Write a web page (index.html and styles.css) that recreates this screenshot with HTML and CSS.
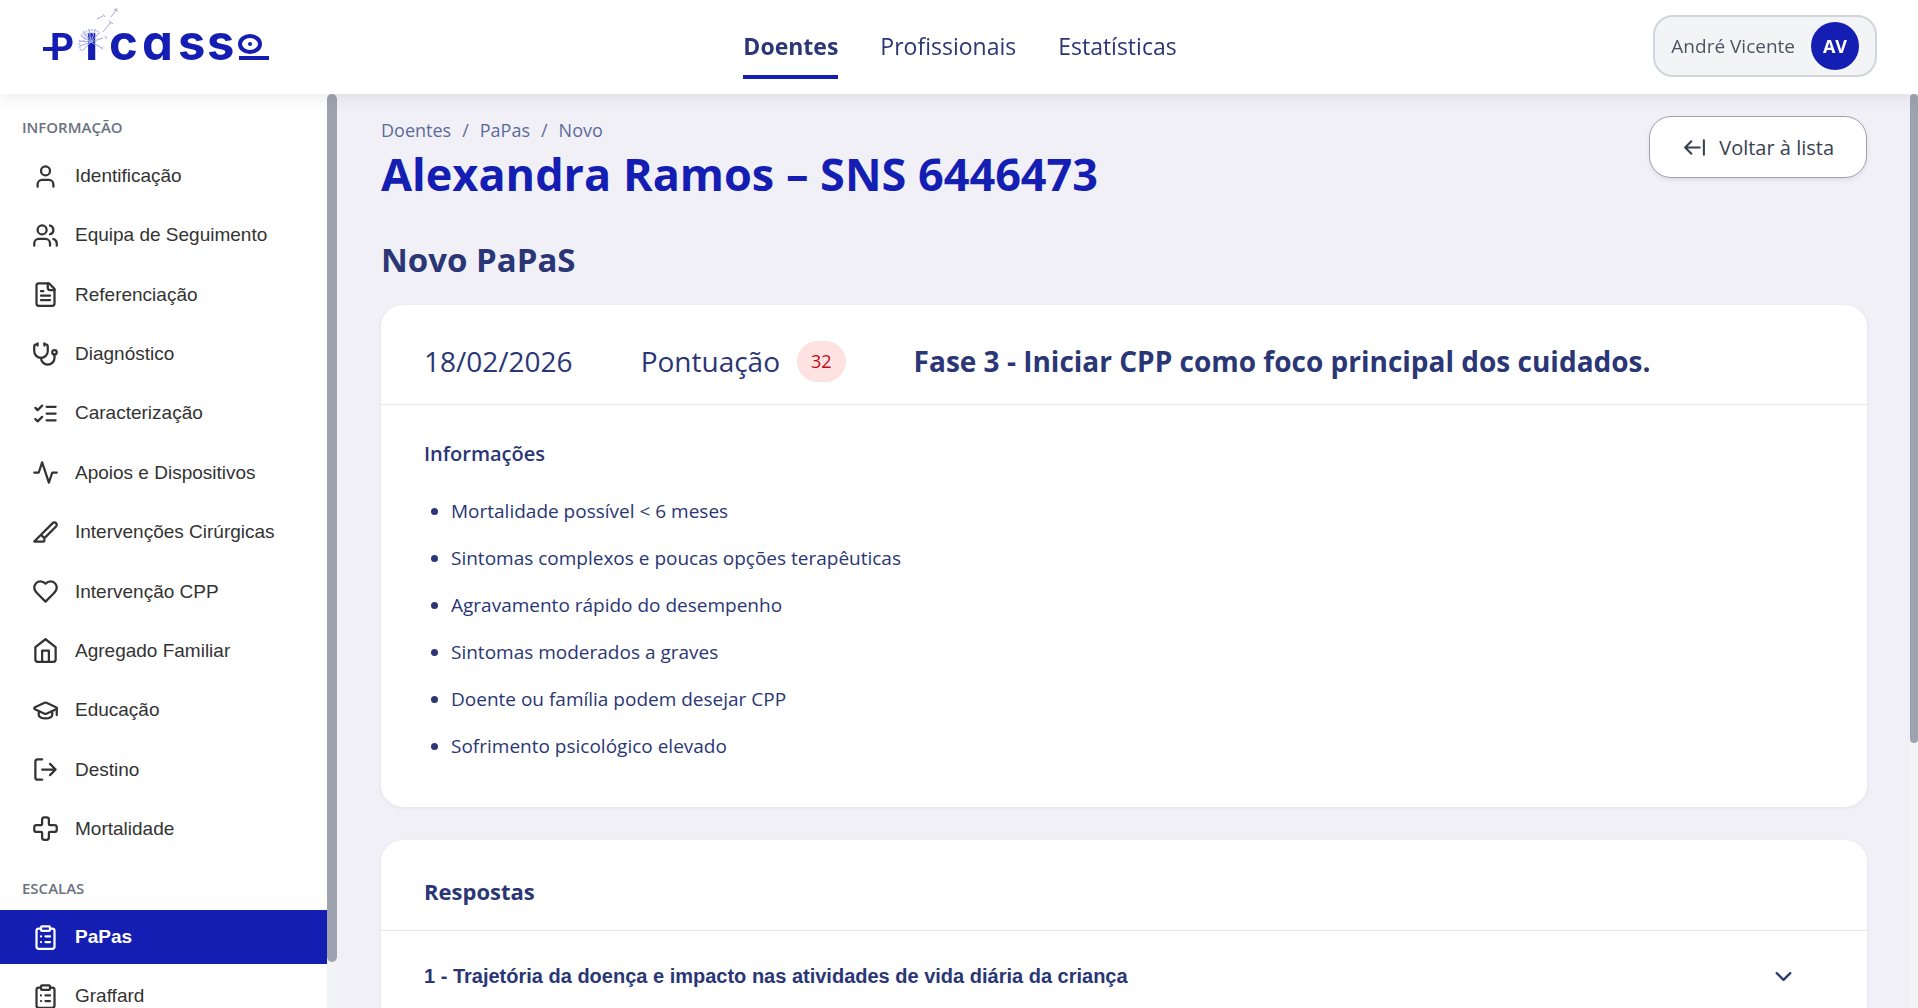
FILE: index.html
```html
<!DOCTYPE html>
<html lang="pt">
<head>
    <meta charset="UTF-8">
    <meta name="viewport" content="width=device-width, initial-scale=1.0">
    <title>Picasso - Novo PaPaS</title>
    <link rel="stylesheet" href="styles.css">
</head>
<body>
    <header class="topbar">
        <a href="#" class="logo" aria-label="Picasso">
            <svg width="240" height="90" viewBox="0 0 240 90">
                <g class="logo-text">
                    <text class="logo-cap" x="7" y="60">P</text>
                    <text x="42" y="60">ı</text>
                    <text x="66 99 135 164" y="60">cass</text>
                </g>
                <g class="logo-shapes">
                    <rect x="0" y="47" width="14" height="4" />
                    <rect x="196" y="56" width="30" height="4" />
                    <circle cx="207" cy="44" r="2" />
                    <ellipse class="ring" cx="207" cy="44" rx="10" ry="8" />
                </g>
                <!-- dandelion over the i -->
                <g class="dandelion">
                    <path d="M48 42 38 36M48 42 40 31M48 42 46 29M48 42 52 30M48 42 56 33M48 42 36 41M48 42 37 46M48 42 39 51M48 42 60 38M48 42 59 48" />
                    <path d="M60 32 68 22M66 21l4 3M68 22l-2 2M54 19l6-3M60 14l2 3M68 17l5-7M71 9l4 2M73 10l1-2M62 36l2 3" />
                    <path class="fluff" d="M38 36 42 32 46 30 52 30 57 33M37 40 36 45 38 51M41 36 46 33 53 34M40 42 42 38 50 37M58 49 61 47" />
                </g>
            </svg>
        </a>
        <nav class="main-nav">
            <a href="#" class="active">Doentes</a>
            <a href="#">Profissionais</a>
            <a href="#">Estatísticas</a>
        </nav>
        <button class="user-btn">
            André Vicente
            <span class="avatar">AV</span>
        </button>
    </header>

    <div class="layout">
        <aside class="sidebar">
            <h4>Informação</h4>
            <ul class="menu menu-info">
                <li><a href="#">
                    <svg class="icon" viewBox="0 0 24 24"><path d="M19 21v-2a4 4 0 0 0-4-4H9a4 4 0 0 0-4 4v2" /><circle cx="12" cy="7" r="4" /></svg>
                    Identificação</a></li>
                <li><a href="#">
                    <svg class="icon" viewBox="0 0 24 24"><path d="M16 21v-2a4 4 0 0 0-4-4H6a4 4 0 0 0-4 4v2" /><circle cx="9" cy="7" r="4" /><path d="M22 21v-2a4 4 0 0 0-3-3.87M16 3.13a4 4 0 0 1 0 7.75" /></svg>
                    Equipa de Seguimento</a></li>
                <li><a href="#">
                    <svg class="icon" viewBox="0 0 24 24"><path d="M15 2H6a2 2 0 0 0-2 2v16a2 2 0 0 0 2 2h12a2 2 0 0 0 2-2V7Z" /><path d="M14 2v4a2 2 0 0 0 2 2h4M10 9H8M16 13H8M16 17H8" /></svg>
                    Referenciação</a></li>
                <li><a href="#">
                    <svg class="icon" viewBox="0 0 24 24"><path d="M11 2v2M5 2v2M5 3H4a2 2 0 0 0-2 2v4a6 6 0 0 0 12 0V5a2 2 0 0 0-2-2h-1" /><path d="M8 15a6 6 0 0 0 12 0v-3" /><circle cx="20" cy="10" r="2" /></svg>
                    Diagnóstico</a></li>
                <li><a href="#">
                    <svg class="icon" viewBox="0 0 24 24"><path d="m3 17 2 2 4-4M3 7l2 2 4-4M13 6h8M13 12h8M13 18h8" /></svg>
                    Caracterização</a></li>
                <li><a href="#">
                    <svg class="icon" viewBox="0 0 24 24"><path d="M22 12h-4l-3 9L9 3l-3 9H2" /></svg>
                    Apoios e Dispositivos</a></li>
                <li><a href="#">
                    <svg class="icon" viewBox="0 0 24 24"><path d="M11 16.586V19a1 1 0 0 1-1 1H2L18.37 3.63a1 1 0 1 1 3 3l-9.663 9.663a1 1 0 0 1-1.414 0L8 14" /></svg>
                    Intervenções Cirúrgicas</a></li>
                <li><a href="#">
                    <svg class="icon" viewBox="0 0 24 24"><path d="M19 14c1.49-1.46 3-3.21 3-5.5A5.5 5.5 0 0 0 16.5 3c-1.76 0-3 .5-4.5 2-1.5-1.5-2.74-2-4.5-2A5.5 5.5 0 0 0 2 8.5c0 2.3 1.5 4.05 3 5.5l7 7Z" /></svg>
                    Intervenção CPP</a></li>
                <li><a href="#">
                    <svg class="icon" viewBox="0 0 24 24"><path d="m3 9 9-7 9 7v11a2 2 0 0 1-2 2H5a2 2 0 0 1-2-2z" /><path d="M9 22V12h6v10" /></svg>
                    Agregado Familiar</a></li>
                <li><a href="#">
                    <svg class="icon" viewBox="0 0 24 24"><path d="M21.42 10.922a1 1 0 0 0-.019-1.838L12.83 5.18a2 2 0 0 0-1.66 0L2.6 9.08a1 1 0 0 0 0 1.832l8.57 3.908a2 2 0 0 0 1.66 0z" /><path d="M22 10v6M6 12.5V16a6 3 0 0 0 12 0v-3.5" /></svg>
                    Educação</a></li>
                <li><a href="#">
                    <svg class="icon" viewBox="0 0 24 24"><path d="M9 21H5a2 2 0 0 1-2-2V5a2 2 0 0 1 2-2h4M16 17l5-5-5-5M21 12H9" /></svg>
                    Destino</a></li>
                <li><a href="#">
                    <svg class="icon" viewBox="0 0 24 24"><path d="M4 9a2 2 0 0 0-2 2v2a2 2 0 0 0 2 2h4a1 1 0 0 1 1 1v4a2 2 0 0 0 2 2h2a2 2 0 0 0 2-2v-4a1 1 0 0 1 1-1h4a2 2 0 0 0 2-2v-2a2 2 0 0 0-2-2h-4a1 1 0 0 1-1-1V4a2 2 0 0 0-2-2h-2a2 2 0 0 0-2 2v4a1 1 0 0 1-1 1z" /></svg>
                    Mortalidade</a></li>
            </ul>
            <h4>Escalas</h4>
            <ul class="menu">
                <li><a href="#" class="active">
                    <svg class="icon" viewBox="0 0 24 24"><rect x="8" y="2" width="8" height="4" rx="1" /><path d="M16 4h2a2 2 0 0 1 2 2v14a2 2 0 0 1-2 2H6a2 2 0 0 1-2-2V6a2 2 0 0 1 2-2h2M12 11h4M12 16h4M8 11h.01M8 16h.01" /></svg>
                    PaPas</a></li>
                <li><a href="#">
                    <svg class="icon" viewBox="0 0 24 24"><rect x="8" y="2" width="8" height="4" rx="1" /><path d="M16 4h2a2 2 0 0 1 2 2v14a2 2 0 0 1-2 2H6a2 2 0 0 1-2-2V6a2 2 0 0 1 2-2h2M12 11h4M12 16h4M8 11h.01M8 16h.01" /></svg>
                    Graffard</a></li>
            </ul>
        </aside>
        <div class="scrollbar scrollbar-side"><div class="thumb"></div></div>

        <main class="content">
            <div class="page-head">
                <div>
                    <nav class="breadcrumb">
                        <a href="#">Doentes</a>
                        <span>/</span>
                        <a href="#">PaPas</a>
                        <span>/</span>
                        <a href="#">Novo</a>
                    </nav>
                    <h1>Alexandra Ramos – SNS 6446473</h1>
                </div>
                <button class="back-btn">
                    <svg class="icon" viewBox="0 0 24 24"><path d="m9 6-6 6 6 6M3 12h14M21 19V5" /></svg>
                    Voltar à lista
                </button>
            </div>

            <h2>Novo PaPaS</h2>

            <section class="card">
                <div class="summary">
                    <span>18/02/2026</span>
                    <div class="score">
                        Pontuação
                        <span class="badge">32</span>
                    </div>
                    <strong>Fase 3 - Iniciar CPP como foco principal dos cuidados.</strong>
                </div>
                <div class="info">
                    <h3>Informações</h3>
                    <ul>
                        <li>Mortalidade possível &lt; 6 meses</li>
                        <li>Sintomas complexos e poucas opções terapêuticas</li>
                        <li>Agravamento rápido do desempenho</li>
                        <li>Sintomas moderados a graves</li>
                        <li>Doente ou família podem desejar CPP</li>
                        <li>Sofrimento psicológico elevado</li>
                    </ul>
                </div>
            </section>

            <section class="card answers">
                <h3>Respostas</h3>
                <button class="question" aria-expanded="false">
                    1 - Trajetória da doença e impacto nas atividades de vida diária da criança
                    <svg class="icon" viewBox="0 0 24 24"><path d="m6 9 6 6 6-6" /></svg>
                </button>
            </section>
        </main>
        <div class="scrollbar scrollbar-main"><div class="thumb"></div></div>
    </div>
</body>
</html>
```
FILE: styles.css
```css
* {
    box-sizing: border-box;
}

body {
    font-family: "Segoe UI", "Open Sans", sans-serif;
    margin: 0;
    height: 100vh;
    display: flex;
    flex-direction: column;
    background-color: #f1f0f7;
    color: #2a3675;
    overflow: hidden;
}

h1, h2, h3, h4, ul {
    margin: 0;
    padding: 0;
}

a {
    color: inherit;
    text-decoration: none;
}

button {
    font-family: inherit;
    cursor: pointer;
}

.icon {
    width: 27px;
    height: 27px;
    flex-shrink: 0;
    fill: none;
    stroke: currentColor;
    stroke-width: 2;
    stroke-linecap: round;
    stroke-linejoin: round;
}

/* Top bar */
.topbar {
    display: grid;
    grid-template-columns: 1fr auto 1fr;
    align-items: center;
    height: 94px;
    flex-shrink: 0;
    padding: 0 41px 2px 43px;
    background-color: #fff;
    box-shadow: 0 4px 16px rgba(0, 0, 0, 0.08);
    z-index: 2;
}

.logo {
    align-self: start;
}

.logo svg {
    display: block;
}

.logo-text {
    font-family: Inter, sans-serif;
    font-size: 49px;
    font-weight: 700;
    font-feature-settings: "cv11";
    fill: #151eb3;
}

.logo-cap {
    font-size: 37px;
}

.logo-shapes {
    fill: #151eb3;
}

.logo-shapes .ring {
    fill: none;
    stroke: #151eb3;
    stroke-width: 4;
}

.dandelion {
    fill: none;
    stroke: #a3a7e2;
    stroke-width: 1;
}

.dandelion .fluff {
    stroke-width: 2;
    stroke-dasharray: 2 1;
    opacity: 0.6;
}

.main-nav {
    display: flex;
    gap: 42px;
    font-size: 23px;
}

.main-nav a {
    line-height: 32px;
    padding: 17px 0 13px;
    border-bottom: 4px solid transparent;
}

.main-nav .active {
    font-weight: 700;
    border-bottom-color: #151eb3;
}

.user-btn {
    justify-self: end;
    display: flex;
    align-items: center;
    gap: 16px;
    height: 62px;
    padding: 0 16px;
    font-size: 19px;
    color: #4b5563;
    background-color: #f3f4f6;
    border: 2px solid #d1d5db;
    border-radius: 20px;
}

.avatar {
    width: 48px;
    height: 48px;
    line-height: 48px;
    border-radius: 50%;
    background-color: #151eb3;
    color: #fff;
    font-size: 18px;
    font-weight: 700;
    text-align: center;
}

.layout {
    flex: 1;
    min-height: 0;
    display: flex;
}

/* Sidebar */
.sidebar {
    width: 327px;
    flex-shrink: 0;
    overflow-y: auto;
    scrollbar-width: none;
    background-color: #fff;
    color: #333;
    padding: 1px 0 35px;
}

.sidebar h4 {
    padding: 21px 22px 11px;
    font-size: 15px;
    line-height: 22px;
    font-weight: 600;
    text-transform: uppercase;
    color: #6b7280;
}

.menu {
    list-style: none;
    display: flex;
    flex-direction: column;
    gap: 5px;
}

.menu-info {
    min-height: 707px;
    justify-content: space-between;
}

.menu a {
    display: flex;
    align-items: center;
    gap: 16px;
    height: 54px;
    padding-left: 32px;
    font-family: "Liberation Sans", Arial, sans-serif;
    font-size: 19px;
}

.menu .active {
    background-color: #151eb3;
    color: #fff;
    font-weight: 700;
}

/* Scrollbars */
.scrollbar {
    flex-shrink: 0;
    background-color: #f3f4f6;
}

.thumb {
    background-color: #9ca3af;
    border-radius: 5px;
}

.scrollbar-side {
    width: 10px;
}

.scrollbar-side .thumb {
    height: 95%;
}

.scrollbar-main {
    width: 8px;
}

.scrollbar-main .thumb {
    height: 71%;
}

/* Content */
.content {
    flex: 1;
    overflow-y: auto;
    scrollbar-width: none;
    padding: 22px 43px 44px 44px;
}

.page-head {
    display: flex;
    justify-content: space-between;
    align-items: flex-start;
}

.breadcrumb {
    display: flex;
    gap: 11px;
    font-size: 18px;
    font-weight: 500;
    line-height: 29px;
    color: #5c6b9c;
}

h1 {
    font-size: 45px;
    line-height: 58px;
    color: #151eb3;
}

.back-btn {
    display: flex;
    align-items: center;
    gap: 12px;
    height: 62px;
    padding: 0 32px;
    font-size: 20px;
    color: #374151;
    background-color: #fff;
    border: 1px solid #9ca3af;
    border-radius: 22px;
    box-shadow: 0 2px 4px rgba(0, 0, 0, 0.08);
}

.back-btn .icon {
    width: 25px;
    height: 25px;
}

h2 {
    margin: 34px 0 23px;
    font-size: 33px;
    line-height: 45px;
}

.card {
    background-color: #fff;
    border-radius: 22px;
    box-shadow: 0 1px 4px rgba(0, 0, 0, 0.06);
}

.card + .card {
    margin-top: 33px;
}

.summary {
    display: flex;
    align-items: center;
    gap: 68px;
    padding: 33px 43px 19px;
    border-bottom: 1px solid #e5e7eb;
    font-size: 28px;
    font-weight: 500;
    line-height: 47px;
}

.summary strong {
    font-weight: 700;
}

.score {
    display: flex;
    align-items: center;
    gap: 17px;
}

.badge {
    padding: 0 14px;
    font-size: 18px;
    line-height: 41px;
    color: #c10a12;
    background-color: #fee2e2;
    border-radius: 21px;
}

.info {
    padding: 33px 43px 37px;
}

.info h3 {
    font-size: 20px;
    font-weight: 600;
    line-height: 32px;
    margin-bottom: 18px;
}

.info ul {
    padding-left: 27px;
}

.info li {
    font-size: 19px;
    line-height: 47px;
}

.answers {
    min-height: 500px;
}

.answers h3 {
    padding: 35px 43px 22px;
    border-bottom: 1px solid #e5e7eb;
    font-size: 22px;
    line-height: 33px;
}

.question {
    display: flex;
    justify-content: space-between;
    align-items: center;
    width: 100%;
    height: 90px;
    padding: 0 70px 0 43px;
    font-family: "Liberation Sans", Arial, sans-serif;
    font-size: 20px;
    font-weight: 700;
    color: #2a3675;
    background: none;
    border: none;
}
```
